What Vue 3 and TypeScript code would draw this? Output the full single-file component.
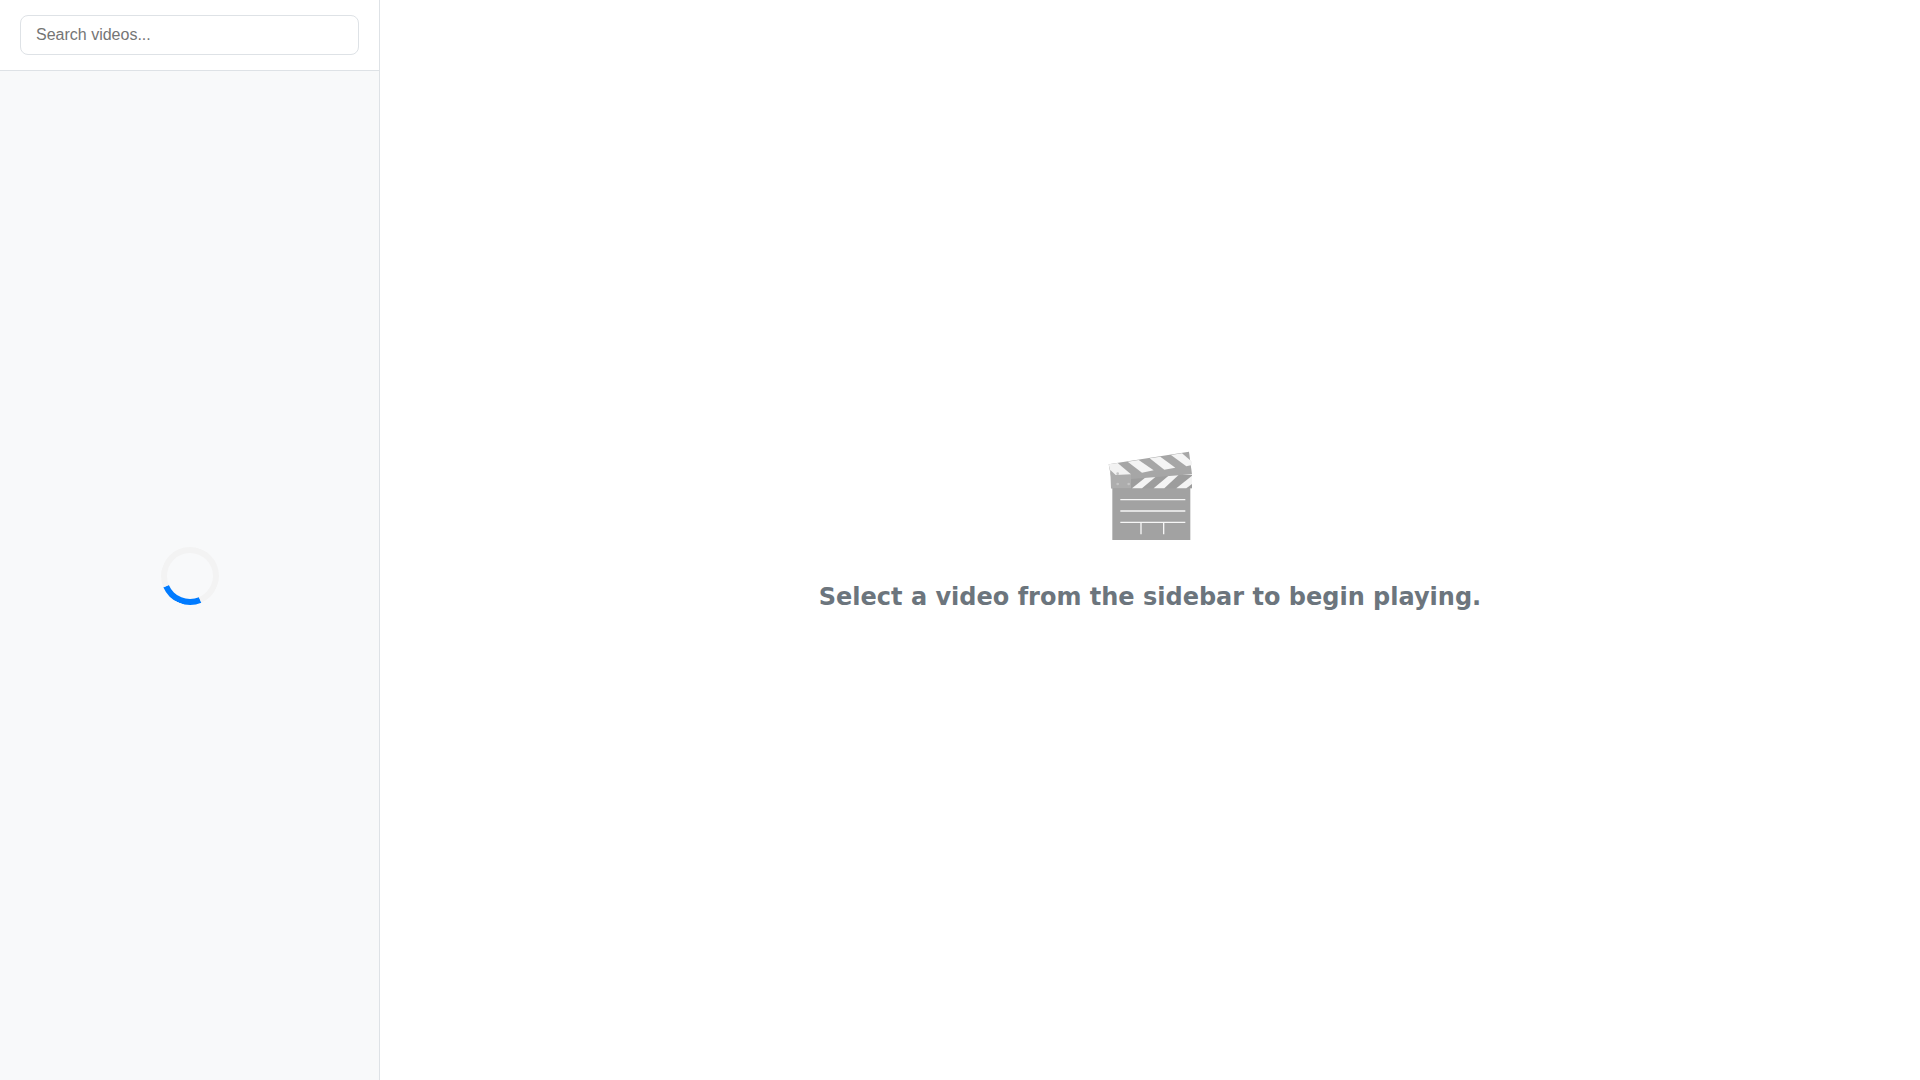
<script setup lang="ts">
const title: string = 'Select a video from the sidebar to begin playing.'
</script>

<template>
  <div class="app">
    <aside class="sidebar">
      <div class="search">
        <input class="search-input" type="text" placeholder="Search videos..." />
      </div>
      <div class="list">
        <div class="spinner"></div>
      </div>
    </aside>
    <main class="main">
      <svg class="clapper" viewBox="50 45 260 275" aria-hidden="true">
        <rect x="66" y="158" width="234" height="157" fill="#a2a2a2" />
        <rect x="62" y="120" width="243" height="40" fill="#9d9d9d" />
        <polygon points="125,160 172,122 205,118 155,160" fill="#f4f4f4" />
        <polygon points="190,160 240,118 272,113 222,160" fill="#f4f4f4" />
        <polygon points="258,160 305,122 305,147 288,160" fill="#f4f4f4" />
        <polygon points="55,88 296,50 305,118 122,132 62,125" fill="#a6a6a6" />
        <polygon points="55,88 82,84 122,118 115,130 64,125" fill="#f2f2f2" />
        <polygon points="112,80 145,75 190,106 155,113" fill="#f4f4f4" />
        <polygon points="178,70 210,65 255,98 222,104" fill="#f4f4f4" />
        <polygon points="242,60 275,55 305,80 305,90 288,94" fill="#f4f4f4" />
        <polygon points="60,105 76,120 122,118 122,160 62,160" fill="#adadad" />
        <circle cx="82" cy="116" r="4" fill="#c4c4c4" />
        <circle cx="82" cy="147" r="4" fill="#c4c4c4" />
        <circle cx="115" cy="147" r="4" fill="#c4c4c4" />
        <g stroke="#f6f6f6" stroke-width="4" fill="none">
          <path d="M90 194H285M90 228H285M90 262H285M152 262V298M220 262V298" />
        </g>
      </svg>
      <h2 class="title">{{ title }}</h2>
    </main>
  </div>
</template>

<style scoped>
.app {
  display: flex;
  height: 1080px;
  font-family: "Liberation Sans", Arial, sans-serif;
  background: #fff;
}
.sidebar {
  width: 380px;
  flex: none;
  box-sizing: border-box;
  display: flex;
  flex-direction: column;
  background: #f8f9fa;
  border-right: 1px solid #dee2e6;
}
.search {
  box-sizing: border-box;
  height: 71px;
  padding: 15px 20px;
  background: #fff;
  border-bottom: 1px solid #dee2e6;
}
.search-input {
  display: block;
  box-sizing: border-box;
  width: 100%;
  height: 40px;
  padding: 0 15px;
  border: 1px solid #dee2e6;
  border-radius: 8px;
  background: #fff;
  font: 16px "Liberation Sans", Arial, sans-serif;
  outline: none;
}
.list {
  flex: 1;
  display: flex;
  align-items: center;
  justify-content: center;
}
.spinner {
  box-sizing: border-box;
  width: 58px;
  height: 58px;
  border: 6px solid #f3f3f3;
  border-top-color: #007bff;
  border-radius: 50%;
  transform: rotate(202deg);
}
.main {
  flex: 1;
  display: flex;
  flex-direction: column;
  align-items: center;
  justify-content: center;
}
.clapper {
  display: block;
  width: 86.67px;
  height: 91.67px;
  margin-bottom: 41px;
  filter: blur(0.4px);
}
.title {
  margin: 0 0 18px;
  font: bold 24px/29px "DejaVu Sans", sans-serif;
  color: #6c757d;
}
</style>
